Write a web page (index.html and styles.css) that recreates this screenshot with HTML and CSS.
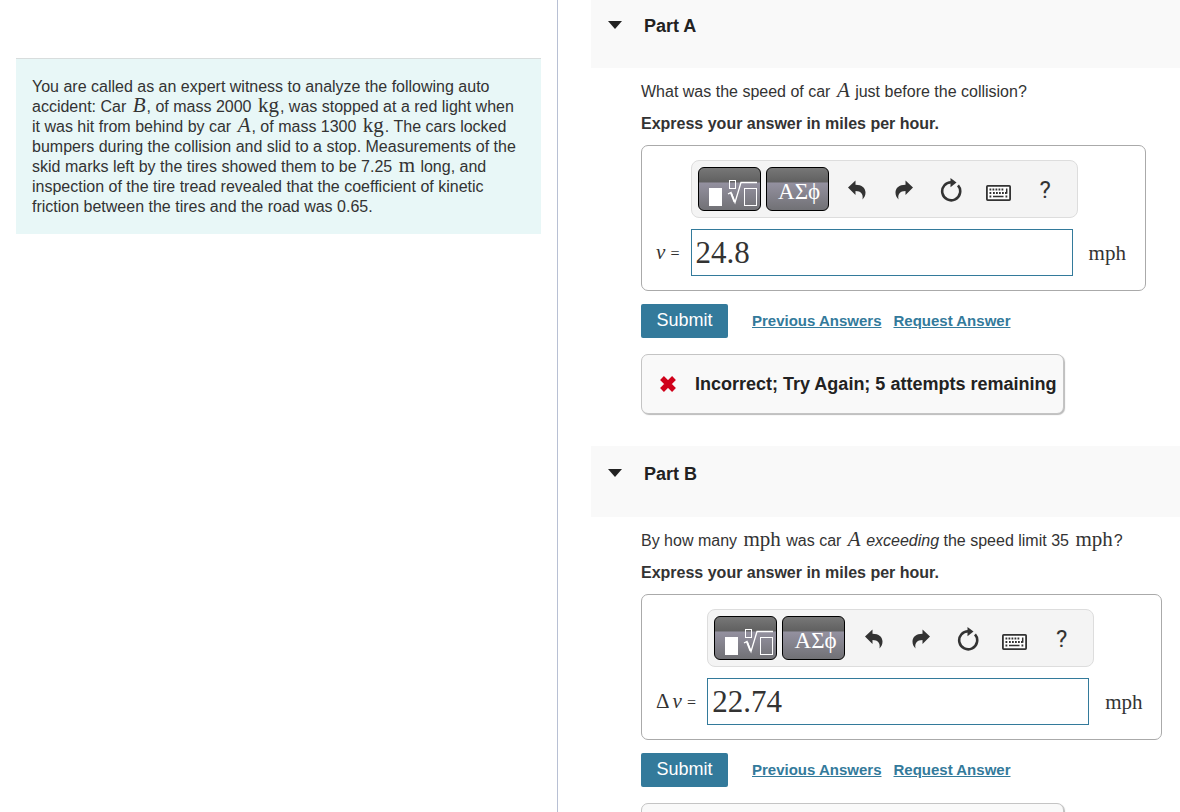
FILE: index.html
```html
<!DOCTYPE html>
<html lang="en">
<head>
  <meta charset="UTF-8" />
  <meta name="viewport" content="width=device-width, initial-scale=1.0"/>
  <title>Collision Problem</title>
  <link rel="stylesheet" href="styles.css">
</head>
<body>
  <!-- Shared icons -->
  <svg class="icon-defs" aria-hidden="true">
    <symbol id="icon-root" viewBox="0 0 63 43">
      <rect x="11" y="20" width="13" height="18" fill="#fff"/>
      <rect x="31.500" y="12.500" width="6" height="8" fill="none" stroke="#fff"/>
      <path d="M30 26l3-1.500 4 10 6-20H59" fill="none" stroke="#fff" stroke-width="1.300"/>
      <path d="M33 25l3.500 9" stroke="#fff" stroke-width="2"/>
      <rect x="46.500" y="20.500" width="12" height="17" fill="none" stroke="#fff"/>
    </symbol>
    <symbol id="icon-undo" viewBox="0 0 18 20">
      <path d="M0 7.500L7.500 .5v4.200c6.500 0 10 3.300 10 7.800 0 2.600-.9 4.800-3 7 1-5.500-1.500-8.500-7-8.500v4z" fill="#333"/>
    </symbol>
    <symbol id="icon-reset" viewBox="0 0 22 24">
      <path d="M11.500 4.300A9 9 0 1 0 18 7.400" fill="none" stroke="#333" stroke-width="2.600"/>
      <path d="M10.500 0l6 4.600-6 4.600z" fill="#333"/>
    </symbol>
    <symbol id="icon-keyboard" viewBox="0 0 25 16">
      <rect x=".9" y=".9" width="23.200" height="14.200" rx=".8" fill="#fff" stroke="#333" stroke-width="1.800"/>
      <path d="M3.500 4.500h15M3.500 8h2M7 8h13.500M3.500 11.500h2M19.500 11.500h2" stroke="#333" stroke-width="1.800" stroke-dasharray="1.800 1.200"/>
      <path d="M7 11.500h10.500M20.700 3.500v5.300" stroke="#333" stroke-width="1.500"/>
    </symbol>
    <symbol id="icon-wrong" viewBox="0 0 18 18">
      <path d="M3 3l12 12M15 3L3 15" stroke="#d0021b" stroke-width="5.400"/>
    </symbol>
  </svg>

  <div class="page">
    <aside class="problem">
      <p class="problem-text">You are called as an expert witness to analyze the following auto accident: Car <i class="math">B</i>, of mass 2000 <span class="math">kg</span>, was stopped at a red light when it was hit from behind by car <i class="math">A</i>, of mass 1300 <span class="math">kg</span>. The cars locked bumpers during the collision and slid to a stop. Measurements of the skid marks left by the tires showed them to be 7.25 <span class="math">m</span> long, and inspection of the tire tread revealed that the coefficient of kinetic friction between the tires and the road was 0.65.</p>
    </aside>

    <main class="parts">
      <section class="part">
        <header class="part-header">
          <span class="arrow"></span>
          <h2>Part A</h2>
        </header>
        <div class="part-body">
          <p class="question">What was the speed of car <i class="math">A</i> just before the collision?</p>
          <p class="instruction">Express your answer in miles per hour.</p>
          <div class="answer-box">
            <div class="toolbar">
              <button class="palette" aria-label="Templates"><svg width="63" height="43"><use href="#icon-root"/></svg></button>
              <button class="palette greek">ΑΣϕ</button>
              <button class="tool" aria-label="Undo"><svg width="18" height="20"><use href="#icon-undo"/></svg></button>
              <button class="tool flip" aria-label="Redo"><svg width="18" height="20"><use href="#icon-undo"/></svg></button>
              <button class="tool" aria-label="Reset"><svg width="22" height="24"><use href="#icon-reset"/></svg></button>
              <button class="tool keys" aria-label="Keyboard shortcuts"><svg width="25" height="16"><use href="#icon-keyboard"/></svg></button>
              <button class="tool">?</button>
            </div>
            <label for="answer-a"><i>v</i> <span class="eq">=</span></label>
            <input type="text" id="answer-a" value="24.8">
            <span class="unit">mph</span>
          </div>
          <div class="actions">
            <button class="submit">Submit</button>
            <a href="#">Previous Answers</a>
            <a href="#">Request Answer</a>
          </div>
          <div class="feedback">
            <svg width="18" height="18"><use href="#icon-wrong"/></svg>
            <span>Incorrect; Try Again; 5 attempts remaining</span>
          </div>
        </div>
      </section>

      <section class="part">
        <header class="part-header">
          <span class="arrow"></span>
          <h2>Part B</h2>
        </header>
        <div class="part-body">
          <p class="question">By how many <span class="math">mph</span> was car <i class="math">A</i> <em>exceeding</em> the speed limit 35 <span class="math">mph</span>?</p>
          <p class="instruction">Express your answer in miles per hour.</p>
          <div class="answer-box">
            <div class="toolbar">
              <button class="palette" aria-label="Templates"><svg width="63" height="43"><use href="#icon-root"/></svg></button>
              <button class="palette greek">ΑΣϕ</button>
              <button class="tool" aria-label="Undo"><svg width="18" height="20"><use href="#icon-undo"/></svg></button>
              <button class="tool flip" aria-label="Redo"><svg width="18" height="20"><use href="#icon-undo"/></svg></button>
              <button class="tool" aria-label="Reset"><svg width="22" height="24"><use href="#icon-reset"/></svg></button>
              <button class="tool keys" aria-label="Keyboard shortcuts"><svg width="25" height="16"><use href="#icon-keyboard"/></svg></button>
              <button class="tool">?</button>
            </div>
            <label for="answer-b"><span class="delta">Δ</span><i>v</i> <span class="eq">=</span></label>
            <input type="text" id="answer-b" value="22.74">
            <span class="unit">mph</span>
          </div>
          <div class="actions">
            <button class="submit">Submit</button>
            <a href="#">Previous Answers</a>
            <a href="#">Request Answer</a>
          </div>
          <div class="feedback"></div>
        </div>
      </section>
    </main>
  </div>
</body>
</html>
```
FILE: styles.css
```css
* {
  box-sizing: border-box;
}
body {
  margin: 0;
  font-family: "Liberation Sans", Arial, sans-serif;
  font-size: 16px;
  line-height: 20px;
  color: #333;
  background: #fff;
}
p, h2 {
  margin: 0;
}
button {
  padding: 0;
  border: none;
  cursor: pointer;
}
.icon-defs {
  display: none;
}
.page {
  display: flex;
  height: 100vh;
  overflow: hidden;
}
.problem {
  flex: 0 0 558px;
  padding: 58px 16px 0;
  border-right: 1px solid #b8c0d4;
}
.problem-text {
  padding: 18px 16px 17px;
  border-top: 1px solid #d8dddd;
  background: #e8f7f7;
}
.math {
  margin: 0 1px 0 2px;
  font-family: "Liberation Serif", serif;
  font-size: 21px;
  line-height: 1px;
}
.parts {
  flex: 1;
  padding-left: 33px;
}

/* Part header */
.part-header {
  display: flex;
  align-items: flex-start;
  gap: 22px;
  height: 71px;
  padding: 18px 17px;
  background: #f9f9f9;
}
.part:first-child .part-header {
  height: 68px;
  padding-top: 16px;
}
.arrow {
  margin-top: 5px;
  border: 7px solid transparent;
  border-top: 8px solid #222;
  border-bottom: none;
}
h2 {
  font-size: 18px;
  line-height: 20px;
  color: #222;
}
.part-body {
  padding: 14px 16px 32px 50px;
}
.instruction {
  margin: 12px 0 11px;
  font-weight: bold;
}

/* Answer box */
.answer-box {
  display: grid;
  grid-template-columns: auto auto auto;
  gap: 11px;
  align-items: center;
  width: fit-content;
  padding: 14px 19px 14px 14px;
  border: 1px solid #aaa;
  border-radius: 7px;
}
.toolbar {
  grid-column: 2;
  display: flex;
  align-items: center;
  width: 387px;
  height: 58px;
  padding: 0 6px;
  border: 1px solid #ddd;
  border-radius: 8px;
  background: #f4f4f4;
}
.palette {
  width: 63px;
  height: 44px;
  margin-right: 5px;
  border: 1px solid #000;
  border-radius: 6px;
  background: linear-gradient(#777, #606060 34%, #9491a0 35%, #717175);
  color: #fff;
}
.palette svg {
  display: block;
  margin: -1px;
}
.greek {
  padding: 6px 0 0 4px;
  font-family: "Liberation Serif", serif;
  font-size: 23px;
  line-height: 20px;
}
.tool {
  display: flex;
  align-items: center;
  justify-content: center;
  width: 47px;
  height: 44px;
  padding-top: 2px;
  background: none;
  font-family: Roboto, sans-serif;
  font-size: 24px;
  color: #333;
}
.flip svg {
  transform: scaleX(-1);
}
.keys {
  padding-top: 8px;
}
.answer-box label {
  grid-column: 1;
  font-family: "Liberation Serif", serif;
  font-size: 21px;
}
.delta {
  padding-right: 3px;
}
.eq {
  font-size: 16px;
}
.answer-box input {
  width: 382px;
  height: 47px;
  padding: 0 4px;
  border: 1px solid #337a9b;
  font-family: "Liberation Serif", serif;
  font-size: 31px;
  color: #333;
}
.unit {
  font-family: "Liberation Serif", serif;
  font-size: 21px;
}

/* Submit row and result */
.actions {
  display: flex;
  align-items: center;
  gap: 12px;
  margin: 13px 0 16px;
}
.submit {
  width: 87px;
  height: 34px;
  margin-right: 12px;
  padding-bottom: 2px;
  border-radius: 2px;
  background: #337a9b;
  color: #fff;
  font-family: inherit;
  font-size: 18px;
}
.actions a {
  color: #337a9b;
  font-size: 15px;
  font-weight: bold;
}
.feedback {
  display: flex;
  align-items: center;
  gap: 18px;
  width: 423px;
  height: 60px;
  padding: 0 17px;
  border: 1px solid #c4c4c4;
  border-radius: 7px;
  background: #f9f9f9;
  box-shadow: 1px 1px 1px #bbb;
  color: #222;
  font-size: 18px;
  font-weight: bold;
  white-space: nowrap;
}
.feedback svg {
  flex: none;
}
```
